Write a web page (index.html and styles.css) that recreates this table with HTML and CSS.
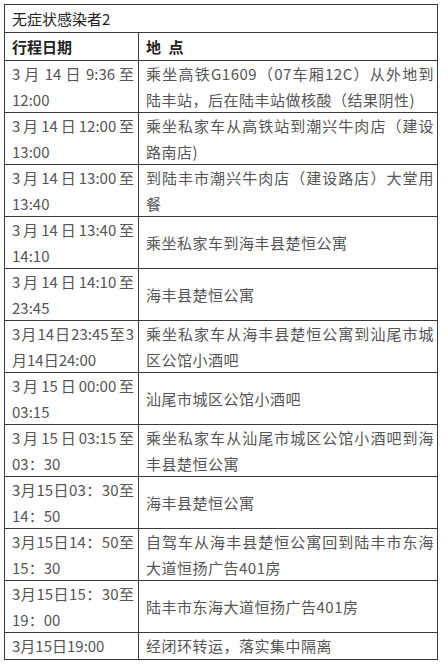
FILE: index.html
```html
<!DOCTYPE html>
<html lang="zh-CN">
<head>
<meta charset="utf-8">
<title>无症状感染者2</title>
<link rel="stylesheet" href="styles.css">
</head>
<body>
<table class="trip">
  <colgroup><col class="c-date"><col class="c-place"></colgroup>
  <tr class="title"><td colspan="2">无症状感染者2</td></tr>
  <tr class="head"><td class="date">行程日期</td><td class="place">地&ensp;点</td></tr>
  <tr><td class="date">3 月 14 日 9:36 至 12:00</td><td class="place">乘坐高铁G1609（07车厢12C）从外地到陆丰站，后在陆丰站做核酸（结果阴性)</td></tr>
  <tr><td class="date">3 月 14 日 12:00 至 13:00</td><td class="place">乘坐私家车从高铁站到潮兴牛肉店（建设路南店)</td></tr>
  <tr><td class="date">3 月 14 日 13:00 至 13:40</td><td class="place">到陆丰市潮兴牛肉店（建设路店）大堂用餐</td></tr>
  <tr><td class="date">3 月 14 日 13:40 至 14:10</td><td class="place">乘坐私家车到海丰县楚恒公寓</td></tr>
  <tr><td class="date">3 月 14 日 14:10 至 23:45</td><td class="place">海丰县楚恒公寓</td></tr>
  <tr><td class="date">3月14日23:45至3月14日24:00</td><td class="place">乘坐私家车从海丰县楚恒公寓到汕尾市城区公馆小酒吧</td></tr>
  <tr><td class="date">3 月 15 日 00:00 至 03:15</td><td class="place">汕尾市城区公馆小酒吧</td></tr>
  <tr><td class="date">3 月 15 日 03:15 至 03：30</td><td class="place">乘坐私家车从汕尾市城区公馆小酒吧到海丰县楚恒公寓</td></tr>
  <tr><td class="date">3月15日03：30至14：50</td><td class="place">海丰县楚恒公寓</td></tr>
  <tr><td class="date">3月15日14：50至15：30</td><td class="place">自驾车从海丰县楚恒公寓回到陆丰市东海大道恒扬广告401房</td></tr>
  <tr><td class="date">3月15日15：30至19：00</td><td class="place">陆丰市东海大道恒扬广告401房</td></tr>
  <tr><td class="date">3月15日19:00</td><td class="place">经闭环转运，落实集中隔离</td></tr>
</table>
</body>
</html>
```
FILE: styles.css
```css
html, body {
  margin: 0;
  padding: 0;
  background: #ffffff;
}
body {
  font-family: "Noto Sans CJK SC", "Noto Sans", sans-serif;
  font-size: 15px;
  color: #555555;
}
.trip {
  margin: 4px 0 0 4px;
  width: 434px;
  border-collapse: collapse;
  table-layout: fixed;
  border: 1px solid #3a3a3a;
}
.c-date { width: 134px; }
.trip td {
  border: 1px solid #3a3a3a;
  line-height: 25.5px;
  vertical-align: middle;
  text-align: justify;
  padding: 0 4px 0 7px;
}
.trip td.date {
  word-spacing: -1px;
}
.trip td.place {
  letter-spacing: 0.5px;
  padding: 0 3px 0 7px;
}
.trip .title td {
  color: #222222;
  padding-top: 1px;
}
.trip .head td {
  color: #222222;
  font-weight: bold;
  padding-top: 1px;
  padding-bottom: 1px;
  letter-spacing: 0;
}
```
